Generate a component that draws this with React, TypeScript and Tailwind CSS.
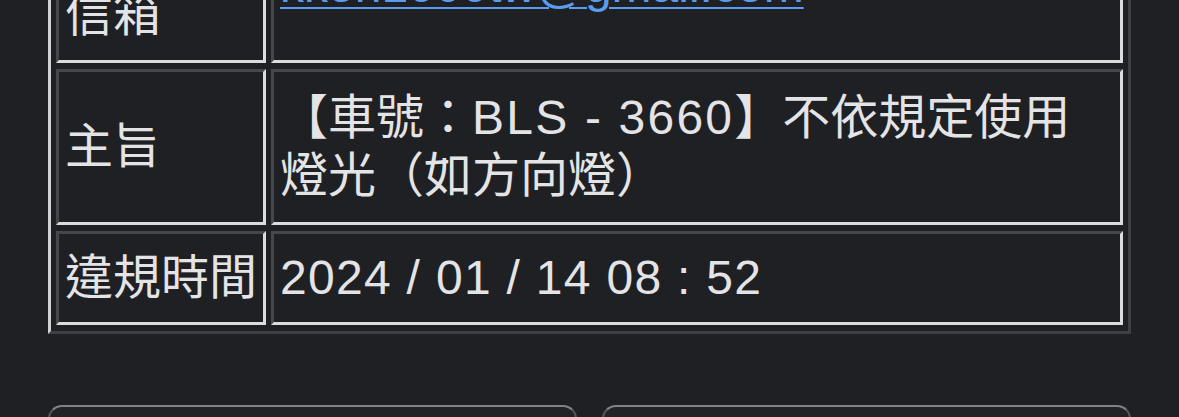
export default function App() {
  const light = 'border-[3px] border-t-[#46474b] border-l-[#46474b] border-r-[#dcdcde] border-b-[#dcdcde]';
  const label = `${light} w-[210px] px-[6px] align-middle text-left font-normal`;
  const value = `${light} px-[6px] align-middle text-left`;

  return (
    <main className="min-h-screen bg-[#1f2024] text-[#e4e4e7] font-['Liberation_Sans','Noto_Sans_CJK_TC',sans-serif] text-[48px] leading-[58px] overflow-hidden">
      <section className="px-12 -mt-[100px] pb-10">
        <table className="w-full border-separate border-spacing-x-[5px] border-spacing-y-[6px] border-[3px] border-t-[#d2d2d4] border-l-[#d2d2d4] border-r-[#3f4044] border-b-[#3f4044]">
          <tbody>
            <tr>
              <th className={`${label} py-[16px]`}>電子郵件信箱</th>
              <td className={`${value} py-[16px]`}>
                <a href="#" className="text-[#5b9cf0] underline decoration-2 underline-offset-[5px]">
                  kkon1000tw@gmail.com
                </a>
              </td>
            </tr>
            <tr>
              <th className={`${label} py-[17px]`}>主旨</th>
              <td className={`${value} py-[17px]`}>
                【車號：<span className="tracking-[2.2px]">BLS - 3660</span>】不依規定使用燈光（如方向燈）
              </td>
            </tr>
            <tr>
              <th className={`${label} py-[15px]`}>違規時間</th>
              <td className={`${value} py-[15px]`}>
                <span className="tracking-[1.3px]">2024 / 01 / 14 08 : 52</span>
              </td>
            </tr>
          </tbody>
        </table>

        <div className="mt-[71px] grid grid-cols-2 gap-[25px]">
          <button className="h-16 rounded-[14px] border-2 border-[#55565a] border-t-[#818286] bg-[#222327]" />
          <button className="h-16 rounded-[14px] border-2 border-[#55565a] border-t-[#818286] bg-[#222327]" />
        </div>
      </section>
    </main>
  );
}
